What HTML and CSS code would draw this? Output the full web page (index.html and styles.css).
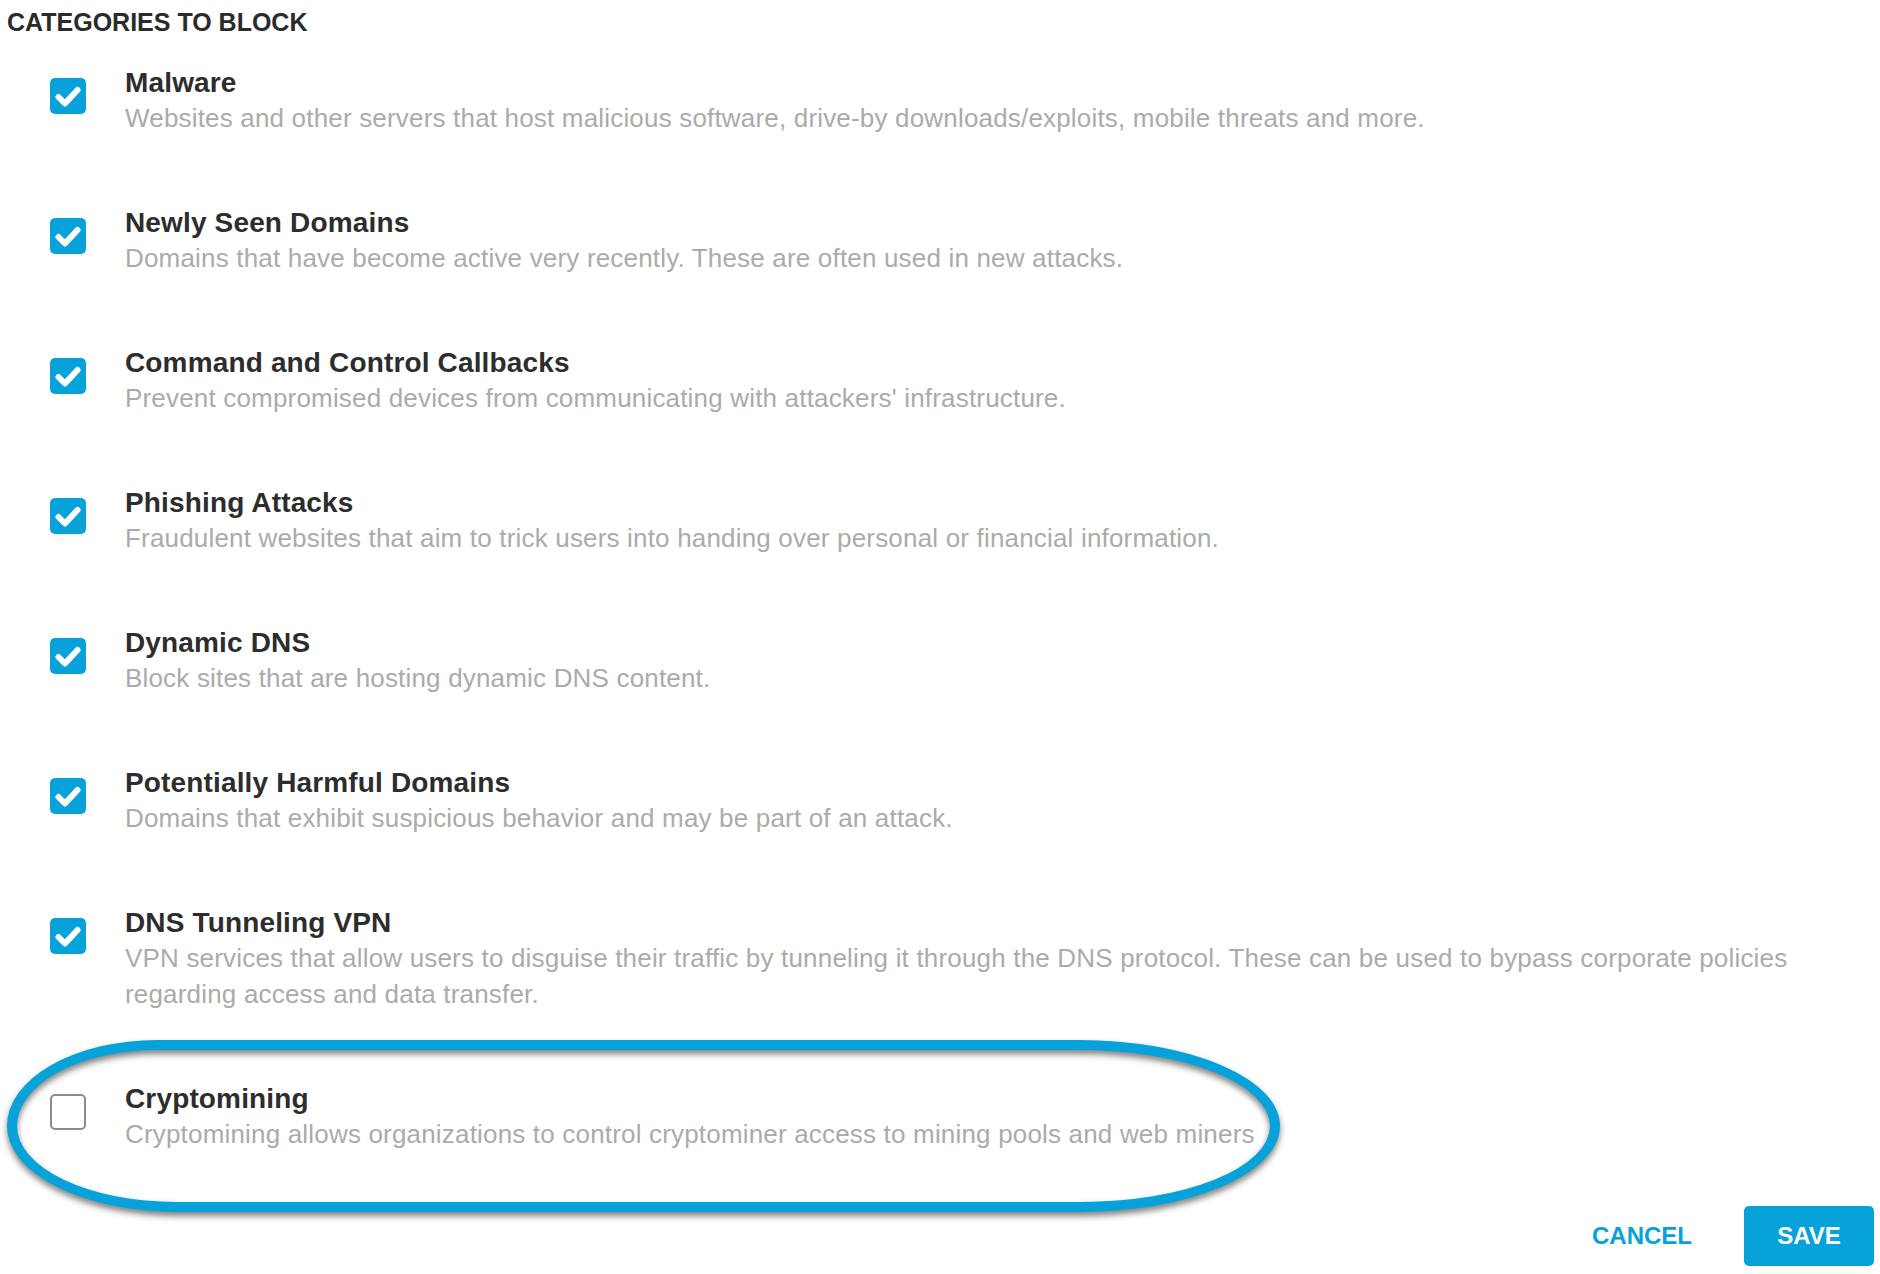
FILE: index.html
```html
<!DOCTYPE html>
<html lang="en">
<head>
<meta charset="utf-8">
<title>Categories to block</title>
<link rel="stylesheet" href="styles.css">
</head>
<body>
<main class="page">
  <h2 class="heading">CATEGORIES TO BLOCK</h2>
  <ul class="categories">
    <li class="category">
      <span class="checkbox checked"><svg viewBox="0 0 36 36" width="36" height="36"><path d="M8.5 19 L15 25.5 L27.5 12" /></svg></span>
      <div class="text">
        <div class="title">Malware</div>
        <div class="desc">Websites and other servers that host malicious software, drive-by downloads/exploits, mobile threats and more.</div>
      </div>
    </li>
    <li class="category">
      <span class="checkbox checked"><svg viewBox="0 0 36 36" width="36" height="36"><path d="M8.5 19 L15 25.5 L27.5 12" /></svg></span>
      <div class="text">
        <div class="title">Newly Seen Domains</div>
        <div class="desc">Domains that have become active very recently. These are often used in new attacks.</div>
      </div>
    </li>
    <li class="category">
      <span class="checkbox checked"><svg viewBox="0 0 36 36" width="36" height="36"><path d="M8.5 19 L15 25.5 L27.5 12" /></svg></span>
      <div class="text">
        <div class="title">Command and Control Callbacks</div>
        <div class="desc">Prevent compromised devices from communicating with attackers' infrastructure.</div>
      </div>
    </li>
    <li class="category">
      <span class="checkbox checked"><svg viewBox="0 0 36 36" width="36" height="36"><path d="M8.5 19 L15 25.5 L27.5 12" /></svg></span>
      <div class="text">
        <div class="title">Phishing Attacks</div>
        <div class="desc">Fraudulent websites that aim to trick users into handing over personal or financial information.</div>
      </div>
    </li>
    <li class="category">
      <span class="checkbox checked"><svg viewBox="0 0 36 36" width="36" height="36"><path d="M8.5 19 L15 25.5 L27.5 12" /></svg></span>
      <div class="text">
        <div class="title">Dynamic DNS</div>
        <div class="desc">Block sites that are hosting dynamic DNS content.</div>
      </div>
    </li>
    <li class="category">
      <span class="checkbox checked"><svg viewBox="0 0 36 36" width="36" height="36"><path d="M8.5 19 L15 25.5 L27.5 12" /></svg></span>
      <div class="text">
        <div class="title">Potentially Harmful Domains</div>
        <div class="desc">Domains that exhibit suspicious behavior and may be part of an attack.</div>
      </div>
    </li>
    <li class="category">
      <span class="checkbox checked"><svg viewBox="0 0 36 36" width="36" height="36"><path d="M8.5 19 L15 25.5 L27.5 12" /></svg></span>
      <div class="text">
        <div class="title">DNS Tunneling VPN</div>
        <div class="desc">VPN services that allow users to disguise their traffic by tunneling it through the DNS protocol. These can be used to bypass corporate policies regarding access and data transfer.</div>
      </div>
    </li>
    <li class="category">
      <span class="checkbox unchecked"></span>
      <div class="text">
        <div class="title">Cryptomining</div>
        <div class="desc">Cryptomining allows organizations to control cryptominer access to mining pools and web miners</div>
      </div>
      <span class="annotation"></span>
    </li>
  </ul>
  <div class="actions">
    <button class="btn-cancel" type="button">CANCEL</button>
    <button class="btn-save" type="button">SAVE</button>
  </div>
</main>
</body>
</html>
```
FILE: styles.css
```css
html, body {
  margin: 0;
  padding: 0;
  background: #ffffff;
}

body {
  font-family: "Liberation Sans", Arial, Helvetica, sans-serif;
  color: #2d2d2d;
}

.page {
  display: flex;
  flex-direction: column;
}

.heading {
  margin: 7px 0 0 7px;
  font-size: 25px;
  line-height: 30px;
  font-weight: 700;
  color: #2b2b2b;
}

.categories {
  list-style: none;
  margin: 29px 0 0 0;
  padding: 0;
  display: flex;
  flex-direction: column;
  gap: 70px;
}

.category {
  position: relative;
  display: flex;
  align-items: flex-start;
}

.checkbox {
  flex: none;
  width: 36px;
  height: 36px;
  margin: 12px 39px 0 50px;
  border-radius: 5px;
  box-sizing: border-box;
  display: flex;
}

.checkbox.checked {
  background: #07a2d9;
}

.checkbox.checked svg path {
  fill: none;
  stroke: #ffffff;
  stroke-width: 6;
  stroke-linecap: round;
  stroke-linejoin: round;
}

.checkbox.unchecked {
  background: #ffffff;
  border: 2px solid #8c8c8c;
}

.text {
  flex: 1;
  padding-right: 20px;
}

.title {
  font-size: 28px;
  line-height: 34px;
  font-weight: 700;
  letter-spacing: 0.15px;
  color: #2d2d2d;
}

.desc {
  font-size: 26px;
  line-height: 36px;
  letter-spacing: 0.18px;
  color: #ababab;
}

.annotation {
  position: absolute;
  left: 7px;
  top: -42px;
  width: 1273px;
  height: 172px;
  box-sizing: border-box;
  border: 10px solid #07a2d9;
  border-radius: 150px 200px 200px 170px / 86px;
  filter: drop-shadow(0 4px 3px rgba(0, 0, 0, 0.5));
  pointer-events: none;
}

.actions {
  display: flex;
  justify-content: flex-end;
  align-items: center;
  margin-top: 54px;
  padding-right: 6px;
}

.btn-cancel {
  background: none;
  border: none;
  padding: 0;
  margin-right: 52px;
  font-family: inherit;
  font-size: 24px;
  font-weight: 700;
  color: #07a2d9;
  cursor: pointer;
}

.btn-save {
  width: 130px;
  height: 60px;
  border: none;
  border-radius: 5px;
  background: #07a2d9;
  color: #ffffff;
  font-family: inherit;
  font-size: 24px;
  font-weight: 700;
  cursor: pointer;
}
```
